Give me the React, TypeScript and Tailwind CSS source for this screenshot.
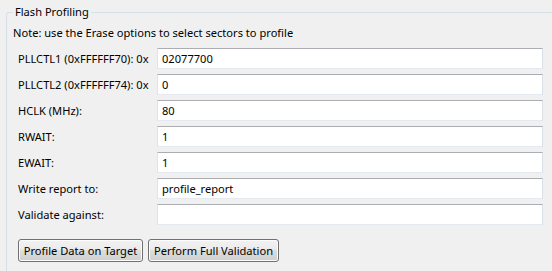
import React from "react";

const rows: { label: string; value: string }[] = [
  { label: "PLLCTL1 (0xFFFFFF70): 0x", value: "02077700" },
  { label: "PLLCTL2 (0xFFFFFF74): 0x", value: "0" },
  { label: "HCLK (MHz):", value: "80" },
  { label: "RWAIT:", value: "1" },
  { label: "EWAIT:", value: "1" },
  { label: "Write report to:", value: "profile_report" },
  { label: "Validate against:", value: "" },
];

function Btn({ children, w }: { children: React.ReactNode; w: string }) {
  return (
    <div
      className={`${w} h-[23px] rounded-[3px] border border-[#707070] flex items-center justify-center text-black shadow-[inset_0_0_0_1px_#fcfcfc] bg-[linear-gradient(to_bottom,#f2f2f2_0%,#ebebeb_45%,#dddddd_50%,#cfcfcf_100%)]`}
    >
      {children}
    </div>
  );
}

export default function App() {
  return (
    <div
      className="w-[552px] h-[271px] overflow-hidden bg-[#f0f0f0] text-[11.1px] leading-[16px] text-black"
      style={{ fontFamily: '"Noto Sans", sans-serif' }}
    >
      <fieldset className="mt-[4px] ml-[6px] w-[580px] h-[300px] border-l border-t border-[#d5dfe5] rounded-tl-[3px] p-0 m-0">
        <legend className="ml-[6px] px-[2px]">Flash Profiling</legend>
        <div className="pl-[6px] pt-[5px]">Note: use the Erase options to select sectors to profile</div>
        <div className="flex flex-col gap-[5px] mt-[7px] pl-[11px]">
          {rows.map((r) => (
            <div key={r.label} className="flex items-center h-[21px]">
              <div className="w-[139px] shrink-0 whitespace-nowrap">{r.label}</div>
              <div className="w-[386px] h-[21px] bg-white border border-t-[#abadb3] border-l-[#e2e3ea] border-r-[#dbdfe6] border-b-[#e3e9ef] pl-[4px] flex items-center">
                {r.value}
              </div>
            </div>
          ))}
        </div>
        <div className="flex gap-[5px] mt-[14px] pl-[11px]">
          <Btn w="w-[125px]">Profile Data on Target</Btn>
          <Btn w="w-[131px]">Perform Full Validation</Btn>
        </div>
      </fieldset>
    </div>
  );
}
